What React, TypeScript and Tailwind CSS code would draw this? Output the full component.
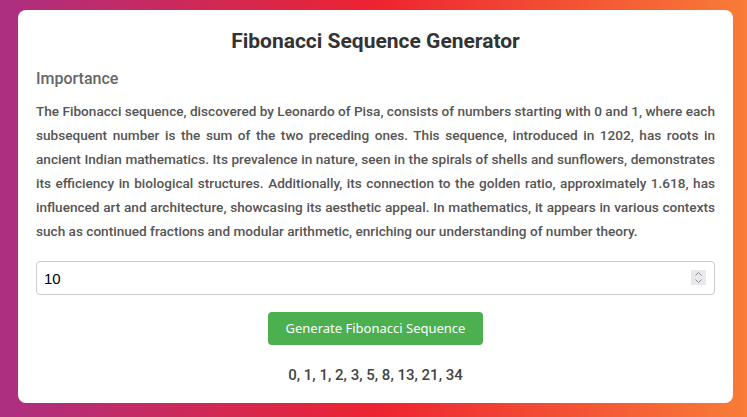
import { useState } from "react";

function fib(n: number) {
  const out: number[] = [];
  let a = 0;
  let b = 1;
  for (let i = 0; i < n; i++) {
    out.push(a);
    [a, b] = [b, a + b];
  }
  return out;
}

export default function App() {
  const [count, setCount] = useState("10");
  const [result, setResult] = useState(fib(10).join(", "));

  return (
    <div className="min-h-screen bg-[linear-gradient(to_right,#ac2f82,#ed2331_50%,#f97c37)] pt-[10px] pr-[14px] pb-[13px] pl-[18px] font-['Roboto',sans-serif]">
      <div className="rounded-lg bg-white px-[18px] pt-[18px] pb-[18px]">
        <h1 className="text-center text-[21px] leading-[26px] font-bold text-[#333]">
          Fibonacci Sequence Generator
        </h1>

        <h2 className="mt-[14px] text-[16px] leading-[22px] font-medium text-[#666]">
          Importance
        </h2>

        <p className="mt-[9px] text-justify text-[13.6px] leading-[24px] font-medium text-[#555]">
          The Fibonacci sequence, discovered by Leonardo of Pisa, consists of
          numbers starting with 0 and 1, where each subsequent number is the sum
          of the two preceding ones. This sequence, introduced in 1202, has
          roots in ancient Indian mathematics. Its prevalence in nature, seen in
          the spirals of shells and sunflowers, demonstrates its efficiency in
          biological structures. Additionally, its connection to the golden
          ratio, approximately 1.618, has influenced art and architecture,
          showcasing its aesthetic appeal. In mathematics, it appears in various
          contexts such as continued fractions and modular arithmetic, enriching
          our understanding of number theory.
        </p>

        <div className="relative mt-[18px]">
          <input
            type="text"
            inputMode="numeric"
            value={count}
            onChange={(e) => setCount(e.target.value)}
            className="block h-[34px] w-full rounded border border-[#ccc] px-[7px] font-['Liberation_Sans',sans-serif] text-[15px] text-black outline-none"
          />
          {/* spin buttons */}
          <div className="absolute top-[9px] right-[9px] flex h-[15px] w-[15px] flex-col items-center justify-center bg-[#e9e9ed]">
            <svg width="9" height="13" viewBox="0 0 9 13" fill="none" stroke="#8a8a95" strokeWidth="1">
              <path d="M1.5 4.5 L4.5 1.5 L7.5 4.5" />
              <path d="M1.5 8.5 L4.5 11.5 L7.5 8.5" />
            </svg>
          </div>
        </div>

        <div className="mt-[17px] flex justify-center">
          <button
            onClick={() => setResult(fib(Number(count) || 0).join(", "))}
            className="h-[33px] w-[215px] rounded bg-[#4caf50] font-['Noto_Sans',sans-serif] text-[13px] text-white"
          >
            Generate Fibonacci Sequence
          </button>
        </div>

        <p className="mt-[20px] text-center text-[15px] leading-[20px] font-medium text-[#444]">
          {result}
        </p>
      </div>
    </div>
  );
}
